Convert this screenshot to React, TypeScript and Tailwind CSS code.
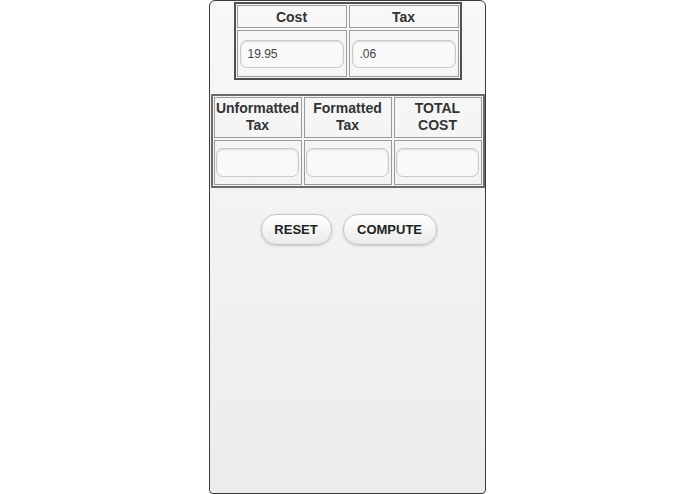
import React from "react";

function Field({ value, w, h }: { value?: string; w: string; h: string }) {
  return (
    <input
      readOnly
      value={value ?? ""}
      className={`${w} ${h} rounded-[7px] border border-[#c9c9c9] bg-[#f9f9f9] px-[7px] text-[12px] text-[#444] shadow-[inset_0_1px_2px_rgba(0,0,0,0.12)] outline-none`}
      style={{ fontFamily: '"Liberation Sans", Arial, sans-serif' }}
    />
  );
}

export default function App() {
  return (
    <div
      className="w-[695px] h-[494px] bg-white flex justify-center"
      style={{ fontFamily: '"Liberation Sans", Arial, sans-serif' }}
    >
      <div className="w-[277px] h-[494px] rounded-t-[6px] rounded-b-[4px] border border-[#3a3a3a] bg-gradient-to-b from-[#f8f8f8] to-[#ececec] flex flex-col items-center">
        {/* top table */}
        <div className="mt-[1px] w-[228px] border-2 border-[#4f4f4f] p-[1px] grid grid-cols-2 gap-[2px]">
          <div className="h-[23px] border border-[#9a9a9a] flex items-center justify-center text-[14px] leading-[16px] font-bold text-[#333]">
            Cost
          </div>
          <div className="h-[23px] border border-[#9a9a9a] flex items-center justify-center text-[14px] leading-[16px] font-bold text-[#333]">
            Tax
          </div>
          <div className="h-[47px] border border-[#9a9a9a] flex items-center justify-center">
            <Field value="19.95" w="w-[104px]" h="h-[28px]" />
          </div>
          <div className="h-[47px] border border-[#9a9a9a] flex items-center justify-center">
            <Field value=".06" w="w-[104px]" h="h-[28px]" />
          </div>
        </div>

        {/* second table */}
        <div className="mt-[14px] w-[274px] border-2 border-[#6a6a6a] p-[1px] grid grid-cols-3 gap-[2px]">
          {[
            ["Unformatted", "Tax"],
            ["Formatted", "Tax"],
            ["TOTAL", "COST"],
          ].map(([a, b]) => (
            <div
              key={a}
              className="h-[41px] border border-[#9a9a9a] flex flex-col items-center justify-center text-[14px] leading-[17px] font-bold text-[#333] whitespace-nowrap pb-[2px]"
            >
              <span>{a}</span>
              <span>{b}</span>
            </div>
          ))}
          {[0, 1, 2].map((i) => (
            <div
              key={i}
              className="h-[45px] border border-[#9a9a9a] flex items-center justify-center"
            >
              <Field w="w-[83px]" h="h-[29px]" />
            </div>
          ))}
        </div>

        {/* buttons */}
        <div className="mt-[26px] flex gap-[11px] ml-[2px]">
          <button className="w-[71px] h-[31px] rounded-[15px] border border-[#c6c6c6] bg-gradient-to-b from-white to-[#eaeaea] shadow-[0_1px_3px_rgba(0,0,0,0.18)] text-[13px] font-bold text-[#222]">
            RESET
          </button>
          <button className="w-[94px] h-[31px] rounded-[15px] border border-[#c6c6c6] bg-gradient-to-b from-white to-[#eaeaea] shadow-[0_1px_3px_rgba(0,0,0,0.18)] text-[13px] font-bold text-[#222]">
            COMPUTE
          </button>
        </div>
      </div>
    </div>
  );
}
